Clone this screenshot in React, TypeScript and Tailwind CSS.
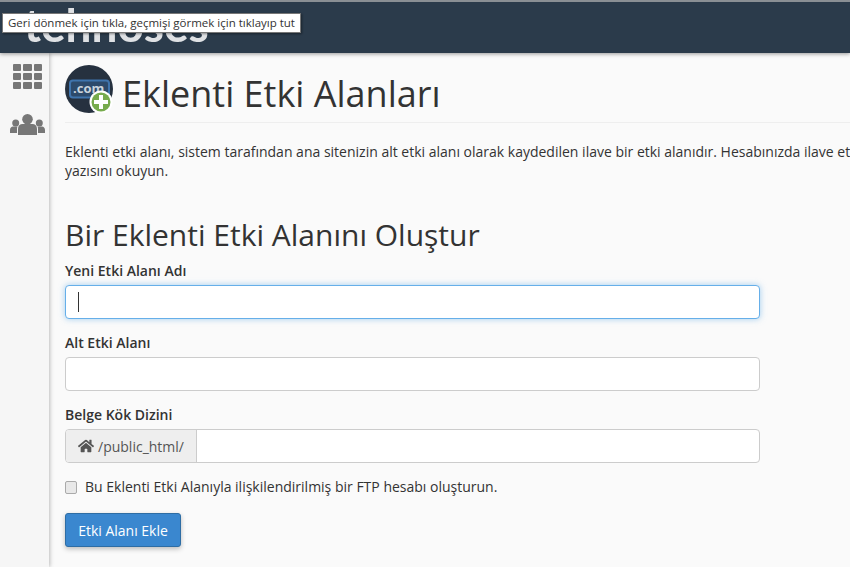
import { FaHome } from "react-icons/fa";

function Field({ label, focused }: { label: string; focused?: boolean }) {
  return (
    <div className="flex flex-col">
      <label className="text-[14px] leading-[20px] font-semibold text-[#333] mb-[4px]">{label}</label>
      {focused ? (
        <div className="h-[34px] w-[695px] bg-white rounded-[4px] border border-[#66afe9] shadow-[0_0_6px_rgba(102,175,233,0.6)] flex items-center pl-[12px]">
          <div className="w-px h-[20px] bg-[#333]" />
        </div>
      ) : (
        <input className="h-[34px] w-[695px] bg-white rounded-[4px] border border-[#ccc] outline-none" />
      )}
    </div>
  );
}

export default function App() {
  return (
    <div className="relative w-[850px] h-[567px] overflow-hidden bg-[#fafafa] text-[#333] font-['Open_Sans',sans-serif]">
      <header className="relative z-10 h-[53px] bg-[#2b3b4b] border-t-2 border-[#8a8f94] shadow-[0_1px_4px_rgba(0,0,0,0.4)] overflow-hidden pl-[24px]">
        <div className="text-[46px] leading-[46px] font-bold text-white/85 font-['Lato',sans-serif] blur-[0.6px]">tehnoses</div>
      </header>
      <div className="absolute z-20 left-[2px] top-[13px] h-[20px] bg-white border border-[#777] shadow-[1px_1px_2px_rgba(0,0,0,0.4)] px-[5px] text-[11.5px] leading-[18px] text-[#333] whitespace-nowrap">
        Geri dönmek için tıkla, geçmişi görmek için tıklayıp tut
      </div>
      <div className="flex h-[514px]">
        <aside className="w-[49px] shrink-0 bg-[#f6f6f6] shadow-[1px_0_4px_rgba(0,0,0,0.25)] flex flex-col items-center pt-[11px] gap-[25px]">
          <div className="grid grid-cols-3 gap-[2px] ml-[6px]">
            {Array.from({ length: 9 }).map((_, i) => (
              <div key={i} className="w-[8.5px] h-[7px] bg-[#777] rounded-[1px]" />
            ))}
          </div>
          <svg width="35" height="21" viewBox="0 0 35 21" className="ml-[6px]" fill="#777">
            <circle cx="17.500" cy="5.300" r="5.300" />
            <path d="M8 21v-6.500C8 12 10 10 12.500 10h10c2.500 0 4.500 2 4.500 4.500V21z" />
            <circle cx="5.700" cy="9" r="3.500" />
            <path d="M0 19v-3c0-2 1.500-3.500 3-3.500h4.500C7 13.500 7 14.500 7 15.500V19z" />
            <circle cx="29.300" cy="9" r="3.500" />
            <path d="M35 19v-3c0-2-1.500-3.500-3-3.500h-4.500c.5 1 .5 2 .5 3V19z" />
          </svg>
        </aside>
        <main className="flex-1 min-w-0 pl-[16px] overflow-hidden">
          <div className="flex items-center gap-[10px] pt-[12px] pb-[9px] border-b border-[#eee] h-[70px]">
            <svg width="48" height="48" viewBox="0 0 48 48" className="shrink-0">
              <circle cx="24" cy="24" r="24" fill="#26313f" />
              <rect x="5" y="15.500" width="39" height="17" rx="3" fill="#2d4a6b" stroke="#3f74ad" strokeWidth="2" />
              <text x="8" y="28" fontSize="13" fontWeight="700" fill="#c9d3dc" fontFamily="Open Sans">.com</text>
              <circle cx="36" cy="37" r="11.500" fill="#fff" />
              <circle cx="36" cy="37" r="9.500" fill="#77ab4d" />
              <path d="M36 30v14M29 37h14" stroke="#fff" strokeWidth="4" />
            </svg>
            <h1 className="text-[36px] leading-[40px] font-normal text-[#333] whitespace-nowrap mt-[10px] -ml-[1px]">Eklenti Etki Alanları</h1>
          </div>
          <p className="mt-[19px] text-[14px] leading-[19px] text-[#333] whitespace-nowrap">
            Eklenti etki alanı, sistem tarafından ana sitenizin alt etki alanı olarak kaydedilen ilave bir etki alanıdır. Hesabınızda ilave etki alanları
            <br />
            yazısını okuyun.
          </p>
          <h2 className="mt-[38px] text-[30px] leading-[33px] font-normal text-[#333] whitespace-nowrap">Bir Eklenti Etki Alanını Oluştur</h2>
          <div className="mt-[10px] flex flex-col gap-[14px]">
            <Field label="Yeni Etki Alanı Adı" focused />
            <Field label="Alt Etki Alanı" />
            <div className="flex flex-col">
              <label className="text-[14px] leading-[20px] font-semibold text-[#333] mb-[4px]">Belge Kök Dizini</label>
              <div className="flex h-[34px] w-[695px] rounded-[4px] border border-[#ccc] bg-white overflow-hidden">
                <div className="flex items-center gap-[4px] px-[12px] bg-[#eee] border-r border-[#ccc] text-[14px] text-[#555]">
                  <FaHome size={16} color="#555" />
                  /public_html/
                </div>
              </div>
            </div>
          </div>
          <label className="mt-[14px] flex items-center text-[14px] leading-[20px] text-[#333]">
            <span className="w-[12px] h-[13px] rounded-[2px] border border-[#aaa] bg-[#e8e8e8] mr-[8px]" />
            Bu Eklenti Etki Alanıyla ilişkilendirilmiş bir FTP hesabı oluşturun.
          </label>
          <button className="mt-[16px] h-[34px] w-[116px] rounded-[3px] bg-[#3a87cf] border border-[#2e6da4] text-white text-[14px] shadow-[0_2px_5px_rgba(0,0,0,0.25)]">
            Etki Alanı Ekle
          </button>
        </main>
      </div>
    </div>
  );
}
